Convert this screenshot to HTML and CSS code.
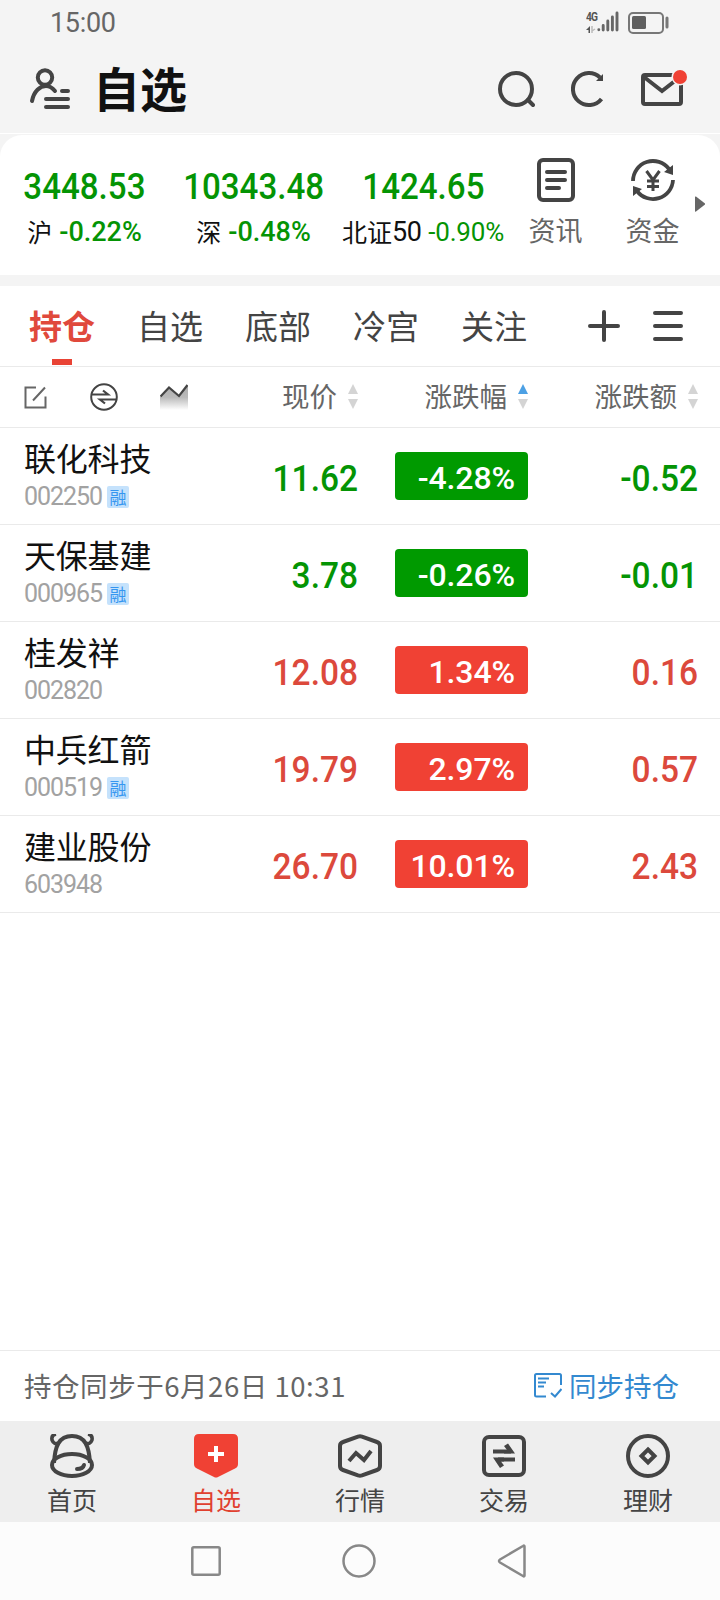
FILE: index.html
```html
<!DOCTYPE html>
<html lang="zh-CN">
<head>
<meta charset="utf-8">
<title>自选</title>
<link rel="stylesheet" href="styles.css">
</head>
<body>
<div class="app">
  <div class="status">
    <span class="clock">15:00</span>
    <div class="status-icons">
      <div class="net"><span class="net-type">4G</span>
        <svg width="10" height="8" viewBox="0 0 10 8"><path d="M0 4 4 0V7H2.500V4Z" fill="#555"/><path d="M6 0V7M6 5L9 3" stroke="#bbb" stroke-width="1.500" fill="none"/></svg>
      </div>
      <svg width="22" height="21" viewBox="0 0 22 21" stroke="#666" stroke-width="2.900" stroke-linecap="round"><path d="M1.800 18.700v.1M6.200 14.500v4.500M10.800 10v9M15.400 6v13M20 2v17"/></svg>
      <svg class="battery" width="42" height="22" viewBox="0 0 42 22"><rect x="1" y="1" width="34" height="20" rx="4" fill="none" stroke="#777" stroke-width="2"/><rect x="4" y="4" width="14" height="13" rx="1.500" fill="#606060"/><path d="M39 6v9" stroke="#777" stroke-width="3" stroke-linecap="round"/></svg>
    </div>
  </div>

  <header class="header">
    <svg width="42" height="43" viewBox="0 0 42 43" fill="none" stroke="#444" stroke-width="4" stroke-linecap="round"><circle cx="16" cy="9.500" r="7.200"/><path d="M3 33C5 23 11 18 17 18Q22 18 26 23M33 23h6M17 31h22M17 39h22"/></svg>
    <h1 class="title">自选</h1>
    <div class="actions">
      <svg width="37" height="37" viewBox="0 0 37 37" fill="none" stroke="#444" stroke-width="4"><circle cx="18" cy="18" r="16"/><path d="M30 29l5 5" stroke-linecap="round"/></svg>
      <svg width="34" height="37" viewBox="0 0 34 37" fill="none" stroke="#444" stroke-width="4"><path d="M29 6.500A16 16 0 1 0 30.500 28"/><path d="M32 3v7h-7Z" fill="#444" stroke="none"/></svg>
      <div class="mail">
        <svg width="42" height="33" viewBox="0 0 42 33" fill="none" stroke="#444" stroke-width="4"><rect x="2" y="2" width="38" height="29" rx="2"/><path d="M3 4L21 18L39 4"/></svg>
        <i class="dot"></i>
      </div>
    </div>
  </header>

  <section class="indices-wrap">
    <div class="indices">
      <div class="index"><span class="index-value">3448.53</span><span class="index-row">沪<b>-0.22%</b></span></div>
      <div class="index"><span class="index-value">10343.48</span><span class="index-row">深<b>-0.48%</b></span></div>
      <div class="index third"><span class="index-value">1424.65</span><span class="index-row">北证<i>50</i><b class="light">-0.90%</b></span></div>
      <div class="shortcut">
        <svg width="44" height="44" viewBox="0 0 44 44" fill="none" stroke="#444" stroke-width="4"><rect x="5" y="2" width="34" height="40" rx="4"/><path d="M13 14h18M13 22h18M13 30h12" stroke-linecap="round"/></svg>
        <span>资讯</span>
      </div>
      <div class="shortcut">
        <svg width="44" height="44" viewBox="0 0 44 44" fill="none" stroke="#444" stroke-width="3.800"><path d="M2 23A20 20 0 0 1 38 11M42 22A20 20 0 0 1 6 33"/><path d="M42 7v10L33 14ZM2 38V28L11 31Z" fill="#444" stroke="none"/><path d="M15.500 13l6.500 9 6.500-9M22 22v11M16 23h12M16 28.500h12" stroke-width="3"/></svg>
        <span>资金</span>
      </div>
      <svg class="more" width="10" height="16" viewBox="0 0 10 16"><path d="M0 1Q0 0 1 .6L10 7.500V8.500L1 15.400Q0 16 0 15Z" fill="#666"/></svg>
    </div>
  </section>

  <nav class="tabs">
    <span class="tab active">持仓</span>
    <span class="tab">自选</span>
    <span class="tab">底部</span>
    <span class="tab">冷宫</span>
    <span class="tab">关注</span>
    <div class="tab-tools">
      <svg width="32" height="32" viewBox="0 0 32 32" stroke="#444" stroke-width="4" stroke-linecap="round"><path d="M16 2v28M2 16h28"/></svg>
      <svg width="30" height="32" viewBox="0 0 30 32" stroke="#444" stroke-width="4" stroke-linecap="round"><path d="M2 3h26M2 16h26M2 29h26"/></svg>
    </div>
  </nav>

  <div class="columns">
    <div class="tools">
      <svg width="23" height="23" viewBox="0 0 23 23" fill="none" stroke="#666" stroke-width="2"><path d="M12 1.500H1.500V21.500H21.500V10.500M9 14.500L21 1.500"/></svg>
      <svg width="28" height="28" viewBox="0 0 28 28" fill="none" stroke="#444" stroke-width="2"><circle cx="14" cy="14" r="12.800"/><path d="M2 11.500h16L13 7.500M26 16.500H10L15 20.500" stroke-width="2.200"/></svg>
      <svg width="28" height="27" viewBox="0 0 28 27"><defs><linearGradient id="fade" x1="0" y1="0" x2="0" y2="1"><stop offset="0" stop-color="#aaa"/><stop offset=".5" stop-color="#bbb"/><stop offset="1" stop-color="#fff"/></linearGradient></defs><path d="M0 13L9 4L19 12L28 1V26H0Z" fill="url(#fade)"/><path d="M.5 12.500L9 3.500L19 12L27.500 1" fill="none" stroke="#444" stroke-width="2.200"/></svg>
    </div>
    <div class="column">现价<i class="sort"></i></div>
    <div class="column">涨跌幅<i class="sort up"></i></div>
    <div class="column">涨跌额<i class="sort"></i></div>
  </div>

  <main class="list">
    <div class="row down"><div class="stock"><span class="name">联化科技</span><span class="code">002250<em>融</em></span></div><span class="price">11.62</span><span class="pill">-4.28%</span><span class="change">-0.52</span></div>
    <div class="row down"><div class="stock"><span class="name">天保基建</span><span class="code">000965<em>融</em></span></div><span class="price">3.78</span><span class="pill">-0.26%</span><span class="change">-0.01</span></div>
    <div class="row rise"><div class="stock"><span class="name">桂发祥</span><span class="code">002820</span></div><span class="price">12.08</span><span class="pill">1.34%</span><span class="change">0.16</span></div>
    <div class="row rise"><div class="stock"><span class="name">中兵红箭</span><span class="code">000519<em>融</em></span></div><span class="price">19.79</span><span class="pill">2.97%</span><span class="change">0.57</span></div>
    <div class="row rise"><div class="stock"><span class="name">建业股份</span><span class="code">603948</span></div><span class="price">26.70</span><span class="pill">10.01%</span><span class="change">2.43</span></div>
  </main>

  <div class="sync">
    <span class="sync-text">持仓同步于6月26日 10:31</span>
    <a class="sync-link">
      <svg width="28" height="25" viewBox="0 0 28 25" fill="none" stroke="#3389d0" stroke-width="2"><path d="M12 23.500H2.500Q1 23.500 1 22V2.500Q1 1 2.500 1H25.500Q27 1 27 2.500V12M4 5.500h11M4 9.500h8M4 13.500h6M17 20l4 3.500L27.500 16"/></svg><span>同步持仓</span></a>
  </div>

  <nav class="bottom">
    <div class="item"><svg width="44" height="44" viewBox="0 0 44 44" fill="none" stroke="#444" stroke-width="4"><path d="M4 29C5 12 9 2 22 2S39 12 40 29"/><ellipse cx="22" cy="31" rx="20" ry="11"/><path d="M6 0Q1 1 2 6Q4 11 8 9M38 0Q43 1 42 6Q40 11 36 9" stroke-width="3.500"/><path d="M27 35Q33 35 34 31" stroke-linecap="round"/></svg><span>首页</span></div>
    <div class="item on"><svg width="44" height="44" viewBox="0 0 44 44"><path d="M5 0H39Q44 0 44 5V30Q44 33 41 34.500L24 43Q22 44 20 43L3 34.500Q0 33 0 30V5Q0 0 5 0Z" fill="#f04134"/><path d="M22 12v16M14 20h16" stroke="#fff" stroke-width="4"/></svg><span>自选</span></div>
    <div class="item"><svg width="44" height="44" viewBox="0 0 44 44" fill="none" stroke="#444" stroke-width="4"><path d="M20 2.600Q22 2 24 2.600L39 8Q42 9 42 12V32Q42 35 39 36L24 41.400Q22 42 20 41.400L5 36Q2 35 2 32V12Q2 9 5 8Z"/><path d="M11 27L18 19L26 26L33 17" stroke-linejoin="miter"/></svg><span>行情</span></div>
    <div class="item"><svg width="44" height="44" viewBox="0 0 44 44" fill="none" stroke="#444" stroke-width="4"><rect x="2" y="3" width="40" height="38" rx="5"/><path d="M11 17.500h18M33 25.500H16"/><path d="M22 12L26 9.500L33 19.500H22V16H25ZM22 31.500L18 34L11 23.500H22V27.500H19Z" fill="#444" stroke="none"/></svg><span>交易</span></div>
    <div class="item"><svg width="44" height="44" viewBox="0 0 44 44" fill="none" stroke="#444" stroke-width="4"><circle cx="22" cy="22" r="20"/><path d="M22 15.500L28.500 22L22 28.500L15.500 22Z"/></svg><span>理财</span></div>
  </nav>

  <div class="system">
    <svg width="30" height="30" viewBox="0 0 30 30" fill="none" stroke="#888" stroke-width="2.500"><rect x="1.300" y="1.300" width="27.400" height="27.400" rx="1.500"/></svg>
    <svg width="34" height="34" viewBox="0 0 34 34" fill="none" stroke="#888" stroke-width="2.500"><circle cx="17" cy="17" r="15.500"/></svg>
    <svg width="30" height="34" viewBox="0 0 30 34" fill="none" stroke="#888" stroke-width="2.500" stroke-linejoin="round"><path d="M27.500 2.500Q27.500 1 26 2L3 15.500Q1 17 3 18.500L26 32Q27.500 33 27.500 31.500Z"/></svg>
  </div>
</div>
</body>
</html>
```

FILE: styles.css
```css
* { box-sizing: border-box; }
body { margin: 0; background: #fff; }
svg { display: block; flex: none; }
i, em, b { font-style: normal; }

.app {
  width: 720px;
  height: 1600px;
  display: flex;
  flex-direction: column;
  overflow: hidden;
  font-family: "Noto Sans CJK SC", sans-serif;
  color: #444;
  white-space: nowrap;
}

/* Status bar */
.status {
  height: 45px;
  display: flex;
  justify-content: space-between;
  padding: 0 50px 0 50px;
  background: #f4f4f4;
}
.clock { padding-top: 1px; font: 27px/45px Roboto, sans-serif; color: #666; letter-spacing: -.3px; }
.status-icons { display: flex; padding-top: 11px; }
.net { width: 11px; display: flex; flex-direction: column; gap: 3px; }
.net-type {
  font: 700 12px/12px Roboto, sans-serif;
  letter-spacing: -1px;
  color: #555;
  transform: scaleX(.85);
  transform-origin: left;
}
.battery { margin: 1px 0 0 9px; }

/* Header */
.header {
  height: 88px;
  display: flex;
  align-items: center;
  padding: 0 37px 0 29px;
  background: #f4f4f4;
}
.title {
  margin: -4px 0 0 22px;
  font-size: 47px;
  line-height: 84px;
  font-weight: 700;
  color: #111;
}
.actions { margin-left: auto; display: flex; align-items: center; }
.actions svg + svg { margin-left: 36px; }
.mail { position: relative; margin-left: 36px; }
.dot {
  position: absolute;
  right: -4px;
  top: -3px;
  width: 14px;
  height: 14px;
  border-radius: 50%;
  background: #f04134;
  box-shadow: 0 0 0 1.500px #f4f4f4;
}

/* Market indices */
.indices-wrap {
  height: 153px;
  padding: 1px 0 12px;
  background: #f4f4f4;
  border-top: 1px solid #fff;
}
.indices {
  height: 140px;
  display: flex;
  background: #fff;
  border-radius: 22px 22px 0 0;
}
.index {
  width: 169px;
  display: flex;
  flex-direction: column;
  align-items: center;
  padding-top: 32px;
}
.index.third { width: 170px; }
.index-value {
  font: 500 36px/40px Roboto, sans-serif;
  color: #049404;
  transform: scaleX(.92);
}
.index-row {
  display: flex;
  align-items: center;
  margin-top: 3px;
  font-size: 25px;
  line-height: 40px;
  color: #111;
}
.index-row i { padding-top: 1px; font: 400 27px/40px Roboto, sans-serif; letter-spacing: -.5px; }
.index-row b {
  margin-left: 7px;
  padding-top: 2px;
  font: 500 27px/40px Roboto, sans-serif;
  color: #049404;
}
.index-row .light { margin-left: 7px; font-weight: 400; font-size: 26px; letter-spacing: -.2px; }
.shortcut {
  width: 97px;
  display: flex;
  flex-direction: column;
  align-items: center;
  padding: 23px 2px 0 0;
  font-size: 27px;
  line-height: 40px;
  color: #666;
}
.shortcut span { margin-top: 8px; }
.more { margin: 61px 0 0 -7px; }

/* Group tabs */
.tabs {
  height: 81px;
  display: flex;
  padding-left: 8px;
  border-bottom: 1px solid #eaeaea;
}
.tab {
  position: relative;
  width: 108px;
  height: 80px;
  text-align: center;
  font-size: 33px;
  line-height: 78px;
}
.tab.active { color: #e0493c; font-weight: 700; }
.tab.active::after {
  content: "";
  position: absolute;
  left: 44px;
  bottom: 1px;
  width: 20px;
  height: 6px;
  background: #e94335;
}
.tab-tools { display: flex; align-items: center; gap: 33px; margin-left: 40px; }

/* Column titles */
.columns {
  height: 61px;
  display: grid;
  grid-template-columns: 188px 170px 170px 170px;
  border-bottom: 1px solid #eaeaea;
  font-size: 27.500px;
  line-height: 56px;
  color: #666;
}
.tools { display: flex; align-items: center; justify-content: space-between; padding-left: 24px; }
.column { display: flex; justify-content: flex-end; }
.sort { width: 10px; height: 25px; margin: 17px 0 0 11px; display: flex; flex-direction: column; justify-content: space-between; }
.sort::before, .sort::after { content: ""; border: 5px solid transparent; }
.sort::before { border-top: 0; border-bottom: 10px solid #d4d4d4; }
.sort::after { border-bottom: 0; border-top: 10px solid #d4d4d4; }
.sort.up::before { border-bottom-color: #4ca0e4; }

/* Stock list */
.list { flex: 1; }
.row {
  height: 97px;
  display: grid;
  grid-template-columns: 190px 168px 170px 170px;
  align-items: center;
  border-bottom: 1px solid #eaeaea;
  font: 500 36px/48px Roboto, sans-serif;
  text-align: right;
}
.stock { display: flex; flex-direction: column; padding: 0 0 7px 24px; text-align: left; }
.name { font: 400 32px/46px "Noto Sans CJK SC", sans-serif; letter-spacing: -.2px; color: #111; }
.code {
  display: flex;
  align-items: center;
  height: 28px;
  margin-top: 3px;
  font: 400 25px/28px Roboto, sans-serif;
  letter-spacing: -1.050px;
  color: #a2a2a2;
}
.code em {
  width: 22px;
  height: 22px;
  margin-left: 5px;
  border-radius: 2px;
  background: #c5e2fc;
  color: #3596f0;
  font: 400 17px/21px "Noto Sans CJK SC", sans-serif;
  letter-spacing: 0;
  text-align: center;
}
.price, .change {
  padding-top: 5px;
  transform: scaleX(.93);
  transform-origin: right;
}
.pill {
  justify-self: end;
  width: 133px;
  height: 48px;
  padding: 2px 13px 0 0;
  border-radius: 4px;
  color: #fff;
  font-size: 32px;
  letter-spacing: -.1px;
}
.down { color: #049404; }
.rise { color: #dc493c; }
.down .pill { background: #009a00; }
.rise .pill { background: #f04134; }

/* Sync strip */
.sync {
  height: 71px;
  display: flex;
  justify-content: space-between;
  padding: 0 41px 0 24px;
  border-top: 1px solid #eaeaea;
  font-size: 27.500px;
  line-height: 68px;
  color: #666;
}
.sync-text { letter-spacing: .55px; }
.sync-link { display: flex; gap: 7px; color: #3389d0; }
.sync-link svg { margin-top: 22px; }

/* Bottom navigation */
.bottom { height: 101px; display: flex; background: #eee; }
.item {
  width: 144px;
  padding-top: 13px;
  display: flex;
  flex-direction: column;
  align-items: center;
  font-size: 25px;
  line-height: 36px;
}
.item span { margin-top: 3px; }
.item.on { color: #e0402f; }

/* System buttons */
.system {
  height: 78px;
  display: flex;
  align-items: center;
  padding-left: 191px;
  gap: 121px;
  background: #fcfcfc;
}
```
